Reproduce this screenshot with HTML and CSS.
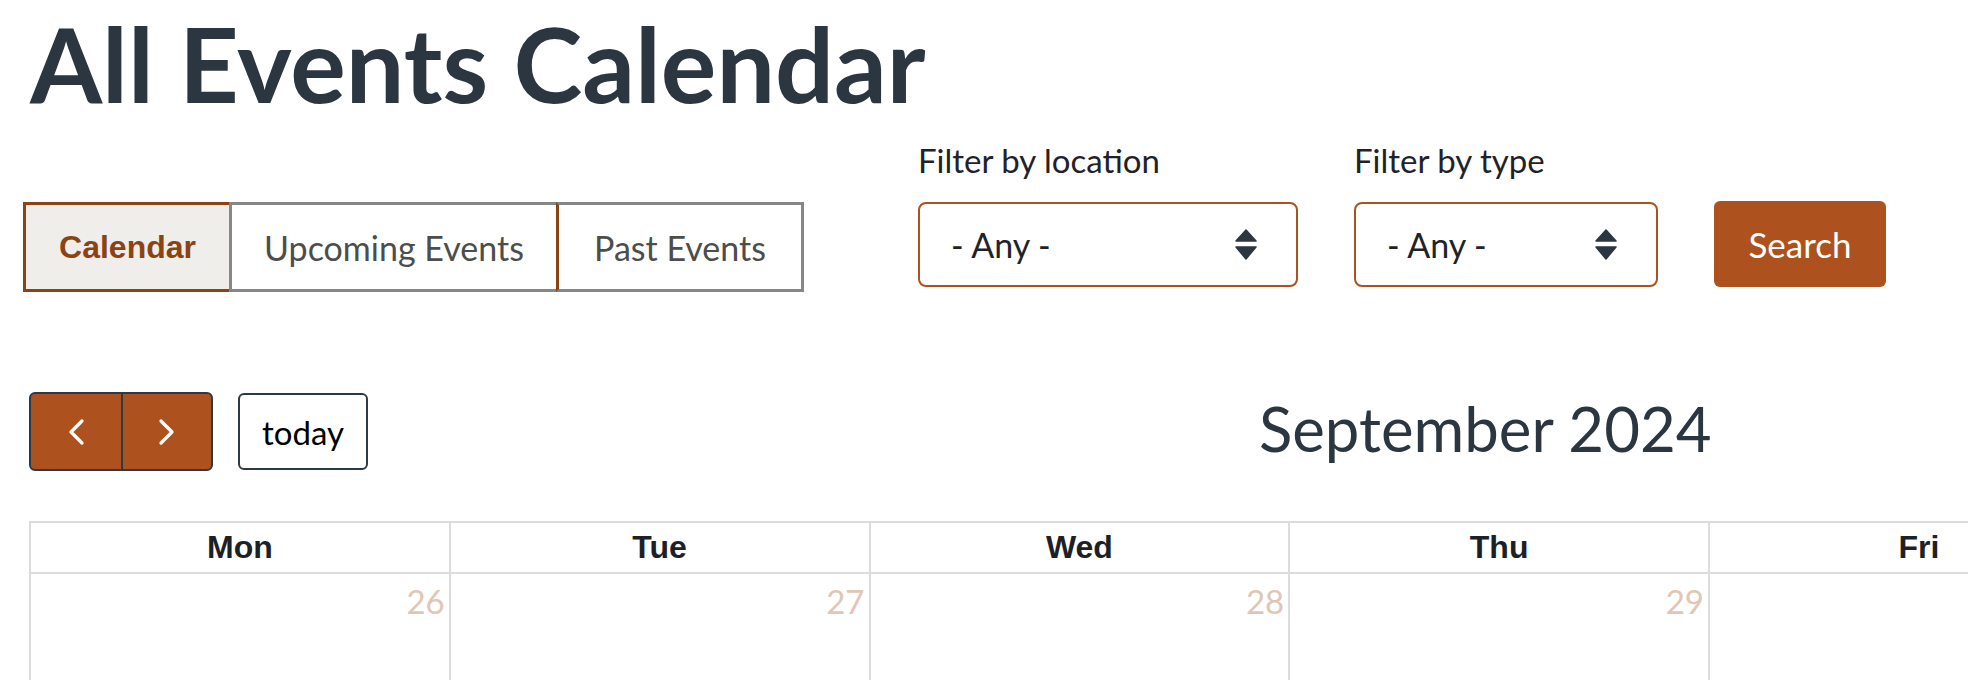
FILE: index.html
```html
<!DOCTYPE html>
<html lang="en">
<head>
<meta charset="utf-8">
<title>All Events Calendar</title>
<link rel="stylesheet" href="styles.css">
</head>
<body>
<div class="page">
  <h1 class="title">All Events Calendar</h1>

  <div class="controls">
    <nav class="tabs">
      <a class="tab tab-active" href="#">Calendar</a>
      <a class="tab tab-upcoming" href="#">Upcoming Events</a>
      <a class="tab tab-past" href="#">Past Events</a>
    </nav>

    <form class="filters">
      <div class="field">
        <label class="field-label">Filter by location</label>
        <div class="select select-loc">
          <span>- Any -</span>
          <svg class="sel-arrows" width="22" height="31" viewBox="0 0 22 31"><path d="M11 1 L21 12 H1 Z M1 18 H21 L11 30 Z" fill="#2c3640" stroke="#2c3640" stroke-width="1.5" stroke-linejoin="round"/></svg>
        </div>
      </div>
      <div class="field">
        <label class="field-label">Filter by type</label>
        <div class="select select-type">
          <span>- Any -</span>
          <svg class="sel-arrows" width="22" height="31" viewBox="0 0 22 31"><path d="M11 1 L21 12 H1 Z M1 18 H21 L11 30 Z" fill="#2c3640" stroke="#2c3640" stroke-width="1.5" stroke-linejoin="round"/></svg>
        </div>
      </div>
      <button class="search" type="button">Search</button>
    </form>
  </div>

  <div class="cal">
    <div class="cal-toolbar">
      <div class="nav">
        <button class="nav-btn nav-prev" type="button"><svg width="18" height="28" viewBox="0 0 18 28"><path d="M15 3 L4 14 L15 25" fill="none" stroke="#fff" stroke-width="3.2" stroke-linecap="round" stroke-linejoin="round"/></svg></button>
        <button class="nav-btn nav-next" type="button"><svg width="18" height="28" viewBox="0 0 18 28"><path d="M3 3 L14 14 L3 25" fill="none" stroke="#fff" stroke-width="3.2" stroke-linecap="round" stroke-linejoin="round"/></svg></button>
      </div>
      <button class="today" type="button">today</button>
      <h2 class="month">September 2024</h2>
    </div>

    <div class="cal-viewport">
      <div class="cal-grid">
        <div class="cal-head">Mon</div>
        <div class="cal-head">Tue</div>
        <div class="cal-head">Wed</div>
        <div class="cal-head">Thu</div>
        <div class="cal-head">Fri</div>
        <div class="cal-head">Sat</div>
        <div class="cal-head">Sun</div>
        <div class="cal-day cal-other">26</div>
        <div class="cal-day cal-other">27</div>
        <div class="cal-day cal-other">28</div>
        <div class="cal-day cal-other">29</div>
        <div class="cal-day cal-other">30</div>
        <div class="cal-day cal-other">31</div>
        <div class="cal-day">1</div>
      </div>
    </div>
  </div>
</div>
</body>
</html>
```
FILE: styles.css
```css
* { box-sizing: border-box; }

html, body { overflow: hidden; }

body {
  margin: 0;
  background: #fff;
  color: #1f2328;
  font-family: "Lato", "Liberation Sans", sans-serif;
}

.page {
  padding: 11px 0 0 23px;
}

.title {
  margin: 0 0 0 7px;
  font-size: 104px;
  line-height: 104px;
  font-weight: 700;
  color: #2c3640;
  white-space: nowrap;
}

/* ---------- tabs + filters ---------- */
.controls {
  display: flex;
  align-items: flex-start;
  margin-top: 25px;
}

.tabs {
  display: flex;
  height: 90px;
  margin-top: 62px;
}

.tab {
  display: flex;
  align-items: center;
  justify-content: center;
  border: 3px solid #878787;
  border-right: 0;
  background: #fff;
  color: #4d4d4b;
  font-size: 34px;
  text-decoration: none;
}

.tab-active {
  width: 206px;
  border-color: #8b4314;
  background: #efeeea;
  color: #8b4314;
  font-family: "Liberation Sans", Arial, sans-serif;
  font-weight: 700;
  font-size: 32px;
}

.tab-upcoming { width: 327px; }

.tab-past {
  width: 248px;
  border-right: 3px solid #878787;
  border-left-color: #8b4314;
}

.filters {
  display: flex;
  align-items: flex-end;
  gap: 56px;
  margin-left: 114px;
}

.field {
  display: flex;
  flex-direction: column;
}

.field-label {
  font-size: 33px;
  line-height: 40px;
  margin-bottom: 22px;
  color: #1f2328;
}

.select {
  display: flex;
  align-items: center;
  justify-content: space-between;
  height: 85px;
  padding: 0 39px 0 31px;
  border: 2px solid #ad521e;
  border-radius: 8px;
  background: #fff;
  font-size: 34px;
  color: #1f2328;
}

.select-loc { width: 380px; }
.select-type { width: 304px; }

.sel-arrows { display: block; }

.search {
  width: 172px;
  height: 86px;
  border: 0;
  border-radius: 6px;
  background: #ad521e;
  color: #fff;
  font-family: "Lato", sans-serif;
  font-size: 35px;
}

/* ---------- calendar ---------- */
.cal {
  margin: 100px 0 0 6px;
}

.cal-toolbar {
  display: flex;
  align-items: center;
  height: 79px;
}

.nav {
  display: flex;
  height: 79px;
  border: 2px solid #2c3a47;
  border-radius: 6px;
  background: #ad521e;
  overflow: hidden;
}

.nav-btn {
  display: flex;
  align-items: center;
  justify-content: center;
  padding: 0;
  border: 0;
  background: transparent;
}

.nav-prev { width: 90px; }

.nav-next {
  width: 90px;
  border-left: 2px solid #2c3a47;
}

.nav-btn svg { display: block; }

.today {
  width: 130px;
  height: 77px;
  margin-left: 25px;
  border: 2px solid #2c3a47;
  border-radius: 6px;
  background: #fff;
  color: #000;
  font-family: "Lato", sans-serif;
  font-size: 33px;
}

.month {
  align-self: flex-start;
  margin: -1px 0 0 891px;
  font-size: 61.7px;
  line-height: 74px;
  font-weight: 400;
  color: #2c3640;
  white-space: nowrap;
}

.cal-viewport {
  margin-top: 50px;
}

.cal-grid {
  display: grid;
  grid-template-columns: repeat(7, 419.75px);
  width: max-content;
  border-top: 2px solid #dcdcdc;
  border-left: 2px solid #dcdcdc;
}

.cal-head {
  height: 51px;
  border-right: 2px solid #dcdcdc;
  border-bottom: 2px solid #dcdcdc;
  text-align: center;
  font-family: "Liberation Sans", Arial, sans-serif;
  font-weight: 700;
  font-size: 32px;
  line-height: 49px;
  color: #1d2125;
}

.cal-day {
  height: 160px;
  padding: 7px 4px 0 0;
  border-right: 2px solid #dcdcdc;
  border-bottom: 2px solid #dcdcdc;
  text-align: right;
  font-size: 33px;
  line-height: 40px;
  color: #2c3640;
}

.cal-other { color: #dfc6b6; }
```
